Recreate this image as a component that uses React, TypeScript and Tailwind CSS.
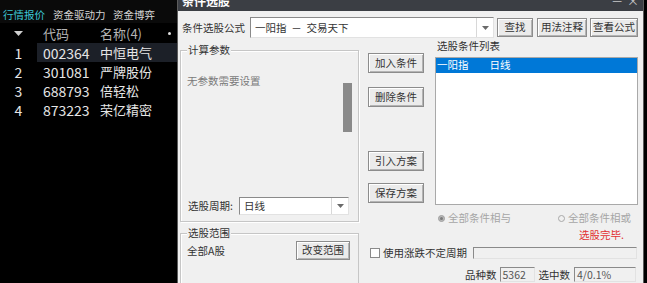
import React from "react";

const rows = [
  { i: "1", code: "002364", name: "中恒电气", sel: true },
  { i: "2", code: "301081", name: "严牌股份", sel: false },
  { i: "3", code: "688793", name: "倍轻松", sel: false },
  { i: "4", code: "873223", name: "荣亿精密", sel: false },
];

const btn =
  "flex items-center justify-center bg-[#ebebeb] border border-[#8c8c8c] shadow-[inset_1px_1px_0_#ffffff,inset_-1px_-1px_0_#b4b4b4] text-[#333] text-[10.5px] leading-none shrink-0";

const sunken =
  "border-t border-l border-[#8a8a8a] border-b border-r border-b-[#e2e2e2] border-r-[#e2e2e2] shrink-0";

function DropArrow() {
  return (
    <svg width="7" height="4" viewBox="0 0 7 4">
      <polygon points="0,0 7,0 3.5,4" fill="#6a6a6a" />
    </svg>
  );
}

export default function App() {
  return (
    <div className="w-[647px] h-[283px] flex bg-black overflow-hidden font-['Noto_Sans_CJK_SC','Noto_Sans',sans-serif]">
      {/* left quote panel */}
      <div className="w-[177px] h-full flex flex-col bg-black shrink-0">
        <div className="h-[23px] flex pt-[8px] pl-[3px] text-[10.5px] leading-[14px] bg-[#0a0a0a]">
          <span className="w-[50px] text-[#3cc8d8]">行情报价</span>
          <span className="w-[60px] text-[#d4d4d4]">资金驱动力</span>
          <span className="text-[#d4d4d4]">资金博弈</span>
        </div>
        <div className="h-[20px] flex items-center text-[13px] leading-none text-[#b4b4b4]">
          <div className="w-[37px] flex justify-center">
            <svg width="9" height="5" viewBox="0 0 9 5">
              <polygon points="0,0 9,0 4.5,5" fill="#cfcfcf" />
            </svg>
          </div>
          <span className="w-[63px] pl-[6px]">代码</span>
          <span className="w-[68px]">名称(4)</span>
          <span className="w-[3px] h-[3px] rounded-full bg-[#e0e0e0]" />
        </div>
        {rows.map((r) => (
          <div key={r.i} className="h-[19px] flex items-center text-[#e6e6e6] leading-none">
            <div className="w-[37px] text-center text-[14px]">{r.i}</div>
            <div className={"flex-1 h-full flex items-center " + (r.sel ? "bg-[#1c2028]" : "")}>
              <span className="w-[63px] pl-[6px] text-[14px]">{r.code}</span>
              <span className="text-[13px]">{r.name}</span>
            </div>
          </div>
        ))}
      </div>

      {/* dialog */}
      <div className="w-[467px] h-full shrink-0 flex flex-col bg-[#f0f0f0] border-x border-[#5c5c5c] text-[10.5px] text-[#333]">
        <div className="h-[11px] shrink-0 bg-[#3b3e44] flex items-start overflow-hidden">
          <span className="ml-[4px] -mt-[6px] text-white font-bold text-[12px] leading-[14px]">条件选股</span>
          <span className="ml-auto -mt-[7px] text-[#c8c8c8] text-[11px] leading-[14px]">—</span>
          <span className="ml-[5px] mr-[4px] -mt-[6px] text-[#c8c8c8] text-[12px] leading-[14px]">×</span>
        </div>

        {/* formula row */}
        <div className="mt-[6px] h-[21px] flex items-center pl-[4px] shrink-0">
          <span className="w-[68px]">条件选股公式</span>
          <div className={"w-[244px] h-[21px] bg-white flex items-center " + sunken}>
            <span className="pl-[4px] flex-1 whitespace-pre">一阳指  －  交易天下</span>
            <div className="w-[17px] h-full flex items-center justify-center border-l border-[#d8d8d8]">
              <DropArrow />
            </div>
          </div>
          <div className={btn + " ml-[3px] w-[36px] h-[19px]"}>查找</div>
          <div className={btn + " ml-[4px] w-[50px] h-[19px]"}>用法注释</div>
          <div className={btn + " ml-[3px] w-[48px] h-[19px]"}>查看公式</div>
        </div>

        {/* main */}
        <div className="flex flex-1 min-h-0">
          {/* left column */}
          <div className="w-[179px] ml-[2px] flex flex-col shrink-0">
            <div className="mt-[12px] h-[172px] border border-[#c6c6c6] shadow-[inset_1px_1px_0_#ffffff,1px_1px_0_#ffffff] relative flex flex-col">
              <span className="absolute -top-[8px] left-[6px] px-[1px] bg-[#f0f0f0] leading-[14px]">计算参数</span>
              <div className="flex pt-[22px]">
                <span className="flex-1 pl-[6px] leading-[16px] text-[#7a7a7a]">无参数需要设置</span>
                <div className="mt-[10px] w-[9px] h-[49px] mr-[6px] bg-[#8a8a8a]" />
              </div>
              <div className="mt-auto mb-[6px] h-[18px] flex items-center">
                <span className="pl-[7px] w-[58px]">选股周期:</span>
                <div className={"w-[110px] h-[18px] bg-white flex items-center " + sunken}>
                  <span className="pl-[4px] flex-1">日线</span>
                  <div className="w-[17px] h-full flex items-center justify-center border-l border-[#d8d8d8]">
                    <DropArrow />
                  </div>
                </div>
              </div>
            </div>
            <div className="mt-[11px] flex-1 border-t border-x border-[#c6c6c6] shadow-[inset_1px_1px_0_#ffffff] relative">
              <span className="absolute -top-[8px] left-[6px] px-[1px] bg-[#f0f0f0] leading-[14px]">选股范围</span>
              <div className="mt-[7px] h-[19px] flex items-center pl-[6px]">
                <span>全部A股</span>
                <div className={btn + " ml-auto mr-[8px] w-[54px] h-[19px]"}>改变范围</div>
              </div>
            </div>
          </div>

          {/* right area */}
          <div className="flex-1 flex flex-col">
            <div className="h-[167px] flex shrink-0">
              <div className="ml-[9px] w-[56px] flex flex-col pt-[15px]">
                <div className={btn + " w-[56px] h-[20px]"}>加入条件</div>
                <div className={btn + " mt-[14px] w-[56px] h-[20px]"}>删除条件</div>
                <div className={btn + " mt-[44px] w-[56px] h-[20px]"}>引入方案</div>
                <div className={btn + " mt-[12px] w-[56px] h-[20px]"}>保存方案</div>
              </div>
              <div className="ml-[11px] w-[203px] flex flex-col">
                <div className="h-[16px] flex items-center pl-[2px]">选股条件列表</div>
                <div className="mt-[3px] h-[148px] border border-[#a9a9a9] bg-white">
                  <div className="h-[15px] bg-[#0078d7] text-white flex items-center pl-[1px] leading-none">
                    <span>一阳指</span>
                    <span className="ml-[21px]">日线</span>
                  </div>
                </div>
              </div>
            </div>

            <div className="mt-[6px] h-[14px] flex items-center pl-[79px] pr-[12px] text-[#a6a6a6] shrink-0">
              <span className="w-[7px] h-[7px] rounded-full bg-[#b8b8b8] border border-[#a0a0a0] flex items-center justify-center">
                <span className="w-[3px] h-[3px] rounded-full bg-[#7a7a7a]" />
              </span>
              <span className="ml-[3px]">全部条件相与</span>
              <span className="ml-auto w-[7px] h-[7px] rounded-full border border-[#a8a8a8] bg-[#f0f0f0]" />
              <span className="ml-[3px]">全部条件相或</span>
            </div>

            <div className="mt-[3px] h-[14px] flex items-center justify-end pr-[19px] text-[#e23232] shrink-0">
              选股完毕.
            </div>

            <div className="mt-[5px] h-[12px] flex items-center pl-[11px] shrink-0">
              <span className="w-[10px] h-[10px] border border-[#8a8a8a] bg-white" />
              <span className="ml-[3px]">使用涨跌不定周期</span>
              <div className={"ml-[6px] w-[164px] h-[12px] bg-[#f0f0f0] " + sunken} />
            </div>

            <div className="mt-[8px] h-[15px] flex items-center pl-[106px] shrink-0">
              <span>品种数</span>
              <div className={"ml-[3px] w-[35px] h-[15px] flex items-center pl-[2px] text-[#555] " + sunken}>5362</div>
              <span className="ml-[4px]">选中数</span>
              <div className={"ml-[4px] w-[62px] h-[15px] flex items-center pl-[2px] text-[#555] " + sunken}>4/0.1%</div>
            </div>
          </div>
        </div>
      </div>
    </div>
  );
}
